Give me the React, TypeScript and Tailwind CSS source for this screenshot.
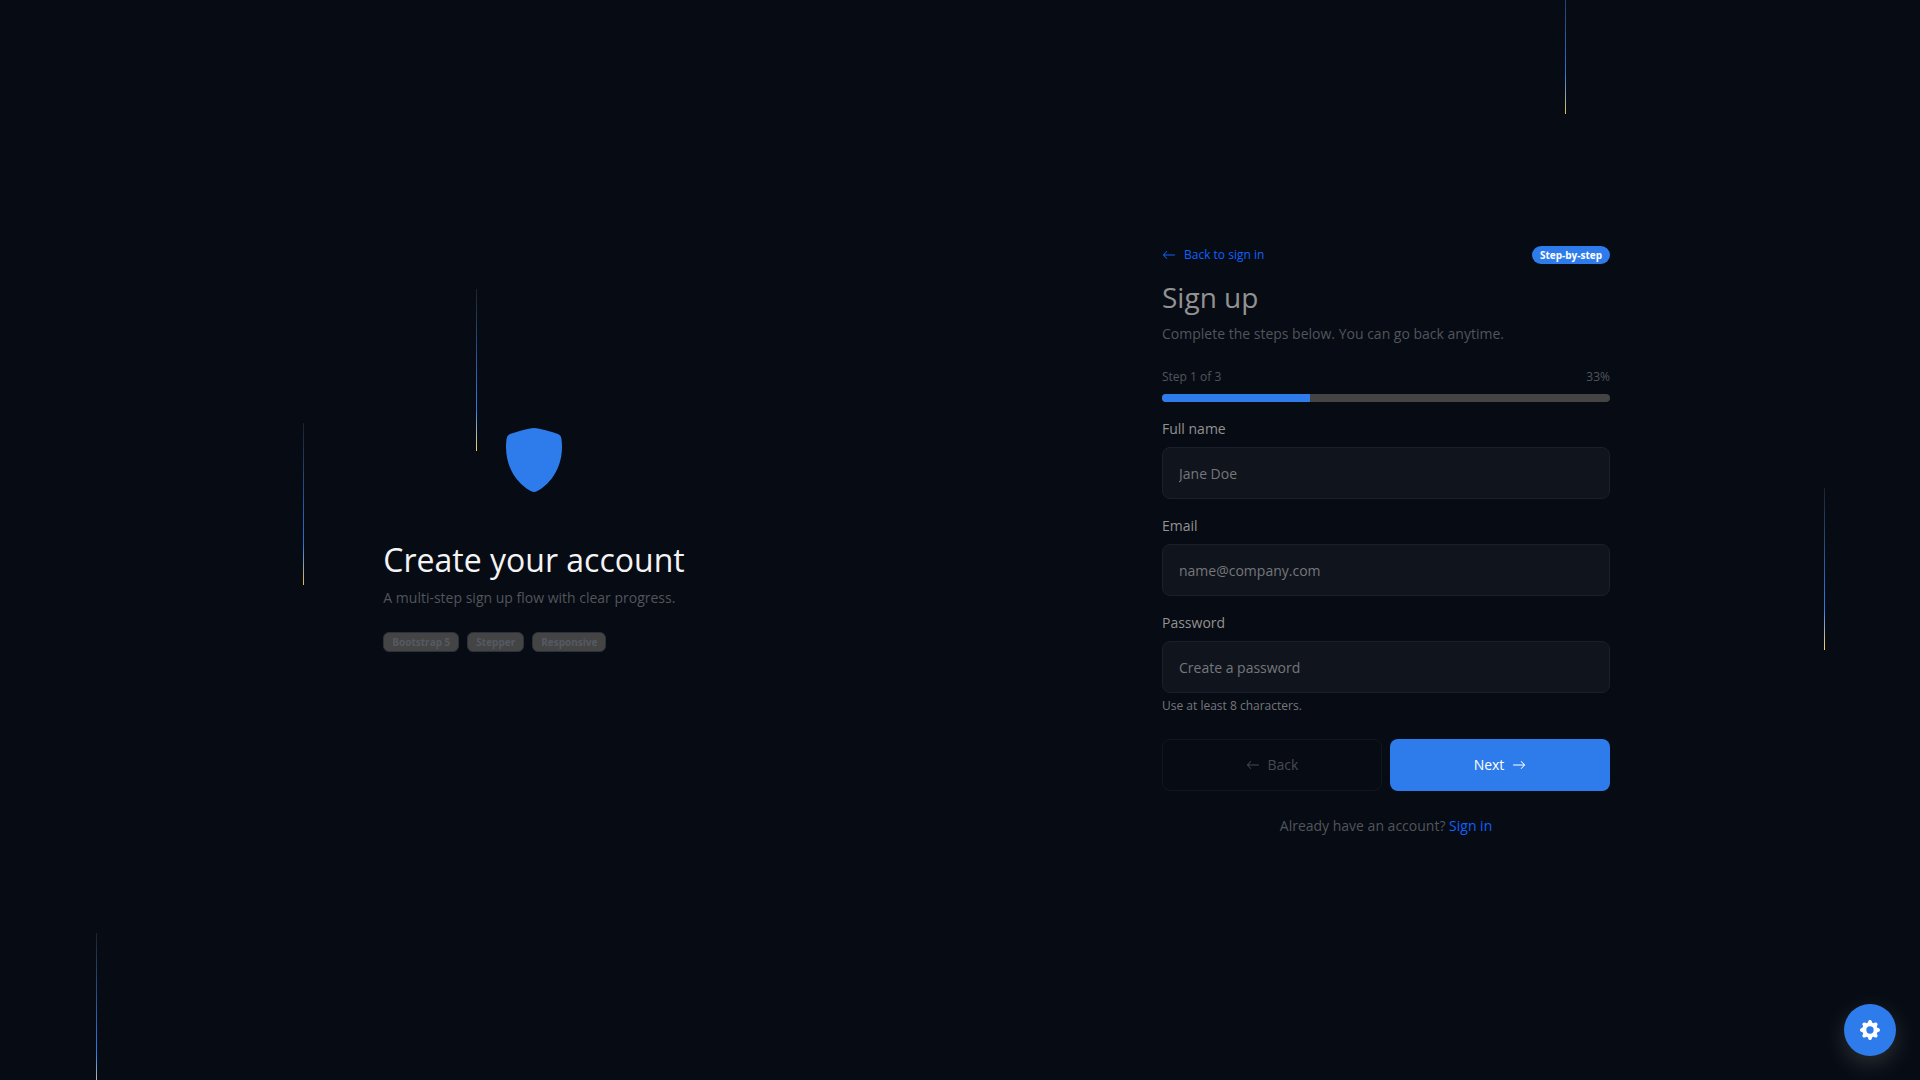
import { useState } from "react";
import { BsArrowLeft, BsArrowRight, BsGearFill, BsShieldFill } from "react-icons/bs";

const beams = [
  { id: 1, position: 'left-[5%] top-[933px]', opacity: 'opacity-100' },
  { id: 2, position: 'left-[303px] top-[423px]', opacity: 'opacity-90' },
  { id: 3, position: 'left-[476px] top-[289px]', opacity: 'opacity-100' },
  { id: 4, position: 'left-[1565px] top-[-48px]', opacity: 'opacity-90' },
  { id: 5, position: 'left-[95%] top-[488px]', opacity: 'opacity-100' }
];

const tags = ['Bootstrap 5', 'Stepper', 'Responsive'];

const fields = [
  { id: 'fullName', label: 'Full name', type: 'text', placeholder: 'Jane Doe' },
  { id: 'email', label: 'Email', type: 'email', placeholder: 'name@company.com' },
  { id: 'password', label: 'Password', type: 'password', placeholder: 'Create a password', hint: 'Use at least 8 characters.' }
];

function Background() {
  return (
    <div className="absolute inset-0 overflow-hidden pointer-events-none" aria-hidden="true">
      {beams.map((beam) => (
        <span
          key={beam.id}
          className={`absolute w-px h-[162px] bg-linear-to-b from-white/10 via-[#2e7ceb] via-75% to-[#ffd04d] ${beam.position} ${beam.opacity}`}
        />
      ))}
    </div>
  );
}

function Intro() {
  return (
    <section className="flex justify-center">
      <div>
        <BsShieldFill className="mx-auto mb-12 size-16 text-[#2e7ceb]" />
        <h1 className="mb-2 text-[32px] leading-[39px] text-[#f4f4f4]">Create your account</h1>
        <p className="mb-6 text-sm leading-[21px] text-[#51555c]">A multi-step sign up flow with clear progress.</p>
        <div className="flex gap-2">
          {tags.map((tag) => (
            <span
              key={tag}
              className="rounded-md border border-[#2c313b] bg-[#444444] px-2 py-1 text-[10px] leading-[10px] font-bold text-[#555a62]"
            >
              {tag}
            </span>
          ))}
        </div>
      </div>
    </section>
  );
}

function SignUpForm() {
  const [step, setStep] = useState(1);
  const percent = Math.round((step / 3) * 100);

  return (
    <section className="flex justify-center">
      <div className="w-full max-w-md">
        <div className="mb-4 flex h-[21px] items-center justify-between">
          <a href="#" className="flex items-center gap-2 text-xs text-[#0d62ff]">
            <BsArrowLeft className="size-3.5" />
            Back to sign in
          </a>
          <span className="rounded-full bg-[#2e7ceb] px-2 py-1 text-[10px] leading-[10px] font-bold text-white">
            Step-by-step
          </span>
        </div>

        <h2 className="mb-2.5 text-[28px] leading-[32px] text-[#929292]">Sign up</h2>
        <p className="mb-6 text-sm leading-[21px] text-[#51555c]">Complete the steps below. You can go back anytime.</p>

        <div className="mb-2 flex justify-between text-xs leading-[18px] text-[#51555c]">
          <span>Step {step} of 3</span>
          <span>{percent}%</span>
        </div>
        <div className="mb-4 h-2 overflow-hidden rounded-md bg-[#444444]">
          <div className="h-full bg-[#2e7ceb]" style={{ width: `${percent}%` }} />
        </div>

        <form onSubmit={(e) => e.preventDefault()}>
          <div className="flex flex-col gap-4">
            {fields.map((field) => (
              <div key={field.id}>
                <label htmlFor={field.id} className="mb-2 block text-sm leading-[21px] text-[#929292]">
                  {field.label}
                </label>
                <input
                  id={field.id}
                  type={field.type}
                  placeholder={field.placeholder}
                  className="block h-[52px] w-full rounded-lg border border-[#1a1f2b] bg-[#10141d] px-4 text-sm text-[#929292] outline-none placeholder:text-[#75777b] focus:border-[#2e7ceb]"
                />
                {field.hint && <p className="mt-1 text-xs leading-[18px] text-[#75777b]">{field.hint}</p>}
              </div>
            ))}
          </div>

          <div className="mt-6 grid grid-cols-2 gap-2">
            <button
              type="button"
              disabled={step === 1}
              onClick={() => setStep(step - 1)}
              className="flex h-[52px] items-center justify-center gap-2 rounded-lg border border-[#1e222c] text-sm text-[#929292] disabled:border-[#12161f] disabled:text-[#464a51]"
            >
              <BsArrowLeft className="size-3.5" />
              Back
            </button>
            <button
              type="button"
              onClick={() => setStep(Math.min(step + 1, 3))}
              className="flex h-[52px] items-center justify-center gap-2 rounded-lg bg-[#2e7ceb] text-sm text-white"
            >
              Next
              <BsArrowRight className="size-3.5" />
            </button>
          </div>
        </form>

        <p className="mt-6 text-center text-sm leading-[21px] text-[#51555c]">
          Already have an account? <a href="#" className="text-[#0d62ff]">Sign in</a>
        </p>
      </div>
    </section>
  );
}

export default function App() {
  return (
    <div className="relative flex min-h-screen items-center bg-[#070b13] font-['Open_Sans','Noto_Sans',sans-serif]">
      <Background />
      <main className="relative mx-auto grid w-full max-w-[1704px] items-center lg:grid-cols-2">
        <Intro />
        <SignUpForm />
      </main>
      <button
        type="button"
        aria-label="Settings"
        className="fixed right-6 bottom-6 flex size-[52px] items-center justify-center rounded-full bg-[#2e7ceb] text-white shadow-[0_8px_24px_rgba(255,255,255,0.15)]"
      >
        <BsGearFill className="size-5" />
      </button>
    </div>
  );
}
